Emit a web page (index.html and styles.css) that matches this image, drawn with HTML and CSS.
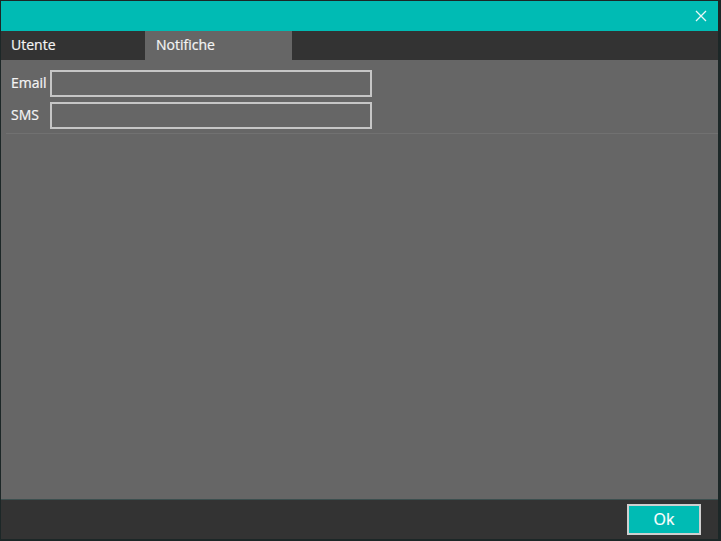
FILE: index.html
```html
<!DOCTYPE html>
<html>
<head>
<meta charset="utf-8">
<link rel="stylesheet" href="styles.css">
</head>
<body>
<div class="window">
  <div class="titlebar">
    <svg class="close" width="12" height="12" viewBox="0 0 12 12"><path d="M1 1 L11 11 M11 1 L1 11" stroke="#e8f8f7" stroke-width="1.3" fill="none"/></svg>
  </div>
  <div class="tabs">
    <div class="tab">Utente</div>
    <div class="tab active">Notifiche</div>
  </div>
  <div class="content">
    <div class="form">
      <div class="row"><label class="label">Email</label><div class="input"></div></div>
      <div class="row"><label class="label">SMS</label><div class="input"></div></div>
    </div>
    <div class="sep"></div>
  </div>
  <div class="footer">
    <button class="ok">Ok</button>
  </div>
</div>
</body>
</html>
```
FILE: styles.css
```css
html, body {
  margin: 0;
  padding: 0;
  background: #1c2727;
}
.window {
  box-sizing: border-box;
  width: 721px;
  height: 541px;
  border-style: solid;
  border-color: #1c2727;
  border-width: 1px 3px 2px 1px;
  display: flex;
  flex-direction: column;
  font-family: "Open Sans", "Noto Sans", sans-serif;
  color: #f2f2f2;
  background: #666666;
}
.titlebar {
  height: 30px;
  background: #00bbb4;
  display: flex;
  justify-content: flex-end;
  align-items: center;
  padding-right: 11px;
}
.close { display: block; }
.tabs {
  height: 29px;
  background: #333333;
  display: flex;
}
.tab {
  width: 144px;
  box-sizing: border-box;
  padding-left: 10px;
  font-size: 14px;
  line-height: 28px;
  color: #f4f4f4;
  -webkit-text-stroke: 0.2px #f4f4f4;
}
.tab.active {
  background: #666666;
  width: 147px;
  padding-left: 11px;
}
.content {
  flex: 1;
  background: #666666;
  display: flex;
  flex-direction: column;
}
.form {
  padding: 10px 0 0 10px;
  display: flex;
  flex-direction: column;
  gap: 5px;
}
.row {
  display: flex;
  align-items: center;
}
.label {
  width: 39px;
  font-size: 14px;
  padding-bottom: 2px;
  color: #f4f4f4;
  -webkit-text-stroke: 0.2px #f4f4f4;
}
.input {
  box-sizing: border-box;
  width: 322px;
  height: 27px;
  border: 2px solid #c6c6c6;
  background: #666666;
}
.sep {
  margin-top: 4px;
  margin-left: 5px;
  height: 1px;
  background: #717171;
}
.footer {
  height: 39px;
  border-top: 1px solid #3c4f4f;
  background: #333333;
  display: flex;
  justify-content: flex-end;
  align-items: flex-start;
  padding-right: 17px;
}
.ok {
  box-sizing: border-box;
  margin-top: 4px;
  width: 74px;
  height: 31px;
  background: #00bbb4;
  border: 2px solid #cfcfcf;
  color: #ffffff;
  font-family: "Open Sans", "Noto Sans", sans-serif;
  font-size: 16px;
  padding: 0 0 2px 0;
  -webkit-text-stroke: 0.2px #ffffff;
}
```
